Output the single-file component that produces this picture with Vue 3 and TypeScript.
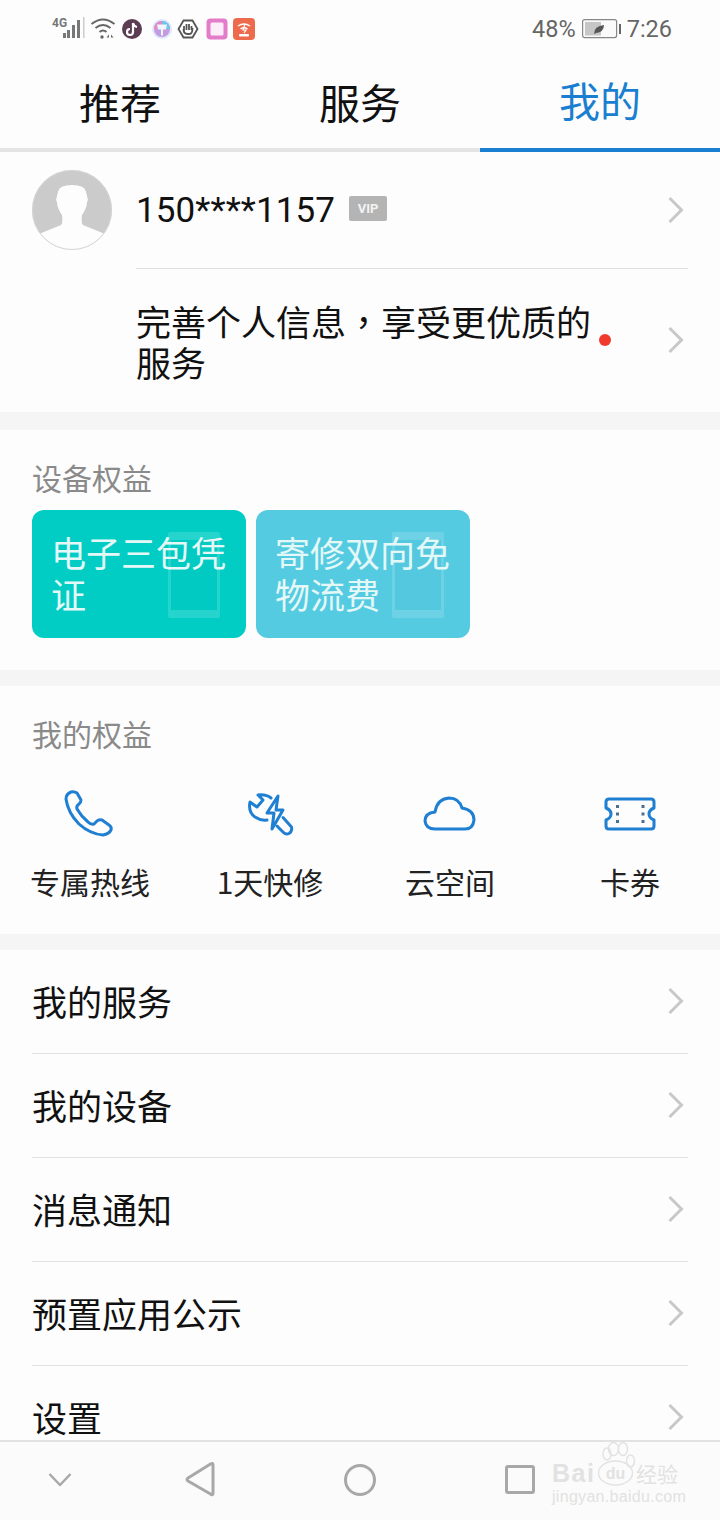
<script setup lang="ts">
const tabs = [
  { label: '推荐', active: false },
  { label: '服务', active: false },
  { label: '我的', active: true },
]
const cards = [
  { text: '电子三包凭证', tone: 'teal' },
  { text: '寄修双向免物流费', tone: 'sky' },
]
const perks = ['专属热线', '1天快修', '云空间', '卡券']
const rows = ['我的服务', '我的设备', '消息通知', '预置应用公示', '设置']
</script>

<template>
  <div class="page">
    <div class="status">
      <div class="status-left">
        <svg class="signal" width="33" height="26" viewBox="0 0 33 26">
          <text x="0" y="11" class="s4g">4G</text>
          <rect x="11" y="17" width="3" height="5" fill="#777" />
          <rect x="15" y="14" width="3" height="8" fill="#777" />
          <rect x="20" y="9" width="3" height="13" fill="#777" />
          <rect x="25" y="4" width="3" height="18" fill="#777" />
          <rect x="31" y="1" width="1.500" height="21" fill="#ccc" />
        </svg>
        <svg class="wifi" width="28" height="24" viewBox="0 0 28 24" fill="none" stroke="#666" stroke-width="2">
          <path d="M1.500 7 Q13 -2 24.500 7" />
          <path d="M5.500 11 Q13 5 20.500 11" />
          <path d="M9.500 15 Q13 12 16.500 15" />
          <circle cx="12" cy="20" r="1.700" fill="#666" stroke="none" />
          <path d="M19 17.500 l-2.500 3 h2.500 z M21 17.500 l2.500 3 h-2.500 z" fill="#666" stroke="none" />
        </svg>
        <svg class="app a1" width="22" height="22" viewBox="0 0 22 22">
          <circle cx="11" cy="11" r="10" fill="#5b3c52" />
          <path d="M12 5 v9 a3 3 0 1 1 -3 -3 M12 5 q1 3.500 4 4" fill="none" stroke="#fff" stroke-width="2.200" />
        </svg>
        <svg class="app a2" width="22" height="22" viewBox="0 0 22 22">
          <circle cx="11" cy="11" r="10" fill="#dfe8fb" />
          <circle cx="11" cy="11" r="8" fill="#c39be0" />
          <path d="M3 11 a8 8 0 0 1 8 -8 v8 z" fill="#e08ac8" />
          <path d="M11 3 a8 8 0 0 1 8 8 h-8 z" fill="#6cc6e8" />
          <path d="M6 6.500 h10 l-1 5 h-3 v6 h-2 v-6 h-3 z" fill="#eef6fb" />
        </svg>
        <svg class="app a3" width="22" height="22" viewBox="0 0 22 22">
          <path d="M6.500 2.500 h9 l5 8.500 -5 8.500 h-9 l-5 -8.500 z" fill="#fff" stroke="#555" stroke-width="1.800" />
          <path d="M7 13 v-5 M9.500 12 v-6 M12 12 v-6 M14.500 12 v-4 M6.500 11 q0 5 4 5 h2 q3 0 3 -6" fill="none" stroke="#555" stroke-width="1.800" />
        </svg>
        <svg class="app a4" width="22" height="22" viewBox="0 0 22 22">
          <rect x="0.500" y="0.500" width="21" height="21" rx="4" fill="#e37cc9" />
          <rect x="4.500" y="4.500" width="13" height="13" rx="1.500" fill="#fbeef8" />
        </svg>
        <svg class="app a5" width="22" height="22" viewBox="0 0 22 22">
          <rect x="0" y="0" width="22" height="22" rx="4" fill="#ee6a4d" />
          <path d="M5 8 q6 -4 12 0 M7.500 11 q3.500 -2.500 7 0" fill="none" stroke="#fff" stroke-width="1.500" />
          <path d="M12 6 l-2 6 h3 l-2 3" fill="none" stroke="#fff" stroke-width="1.200" />
          <rect x="6" y="16" width="10" height="2.500" rx="1" fill="#fff" />
        </svg>
      </div>
      <div class="status-right">
        <span class="pct">48%</span>
        <svg class="battery" width="39" height="20" viewBox="0 0 39 20">
          <rect x="0.600" y="0.600" width="34" height="18" rx="2" fill="#fafafa" stroke="#888" stroke-width="1.200" />
          <rect x="3" y="3" width="16" height="13.500" fill="#c6c6c6" />
          <path d="M12 15 Q12 7 22 6 Q22 13 14 14 z" fill="#555" />
          <rect x="37" y="5" width="2" height="10" fill="#666" />
        </svg>
        <span class="time">7:26</span>
      </div>
    </div>

    <nav class="tabs">
      <div v-for="t in tabs" :key="t.label" class="tab" :class="{ active: t.active }">{{ t.label }}</div>
    </nav>

    <main class="scroll">
      <section class="profile">
        <div class="profile-top">
          <svg class="avatar" width="80" height="80" viewBox="0 0 80 80">
            <defs>
              <clipPath id="avatar-clip"><circle cx="40" cy="40" r="40" /></clipPath>
            </defs>
            <g clip-path="url(#avatar-clip)">
              <rect width="80" height="80" fill="#cbcbcb" />
              <path d="M7 80 V64 L29 55 Q31 53 30 45 Q25 38 25 32 L24 30 L26 22 Q27 15 40 15 Q53 15 54 22 L56 30 L55 32 Q55 38 50 45 Q49 53 51 55 L73 64 V80 Z" fill="#fdfdfd" />
            </g>
            <circle cx="40" cy="40" r="39.500" fill="none" stroke="#d6d6d6" />
          </svg>
          <div class="name-row">
            <span class="phone">150****1157</span>
            <span class="vip">VIP</span>
            <svg class="chev" width="18" height="28" viewBox="0 0 18 28"><path d="M2.500 2 L14.500 14 L2.500 26" /></svg>
          </div>
        </div>
        <div class="profile-info">
          <p class="info-text">完善个人信息<span class="tc">，</span>享受更优质的服务</p>
          <span class="dot"></span>
          <svg class="chev" width="18" height="28" viewBox="0 0 18 28"><path d="M2.500 2 L14.500 14 L2.500 26" /></svg>
        </div>
      </section>

      <section class="block devices">
        <h2 class="block-title">设备权益</h2>
        <div class="cards">
          <div v-for="c in cards" :key="c.text" class="card" :class="c.tone">
            <svg class="ghost" width="52" height="86" viewBox="0 0 52 86">
              <path fill-rule="evenodd" d="M2 0 H50 Q52 0 52 2 V84 Q52 86 50 86 H2 Q0 86 0 84 V2 Q0 0 2 0 Z M3 8 V78 H49 V8 Z" fill="#fff" fill-opacity="0.14" />
              <rect x="3" y="8" width="46" height="70" fill="#000" fill-opacity="0.012" />
            </svg>
            <span class="card-text">{{ c.text }}</span>
          </div>
        </div>
      </section>

      <section class="block perks">
        <h2 class="block-title">我的权益</h2>
        <div class="perk-grid">
          <div v-for="(p, i) in perks" :key="p" class="perk">
            <svg width="56" height="52" viewBox="0 0 56 52" fill="none" stroke="#1f7fd2" stroke-width="3" stroke-linecap="round" stroke-linejoin="round">
              <template v-if="i === 0">
                <path transform="translate(-3 -1)" d="M12 5 Q7 7 7 12 Q9 26 20 37 Q31 47 44 48 Q50 47 52 43 Q53 40 50 38 L43 33 Q40 32 38 34 L35 37 Q32 38 29 35 Q22 29 18 22 Q17 19 20 17 Q22 15 22 13 L18 6 Q15 4 12 5 Z" />
              </template>
              <template v-else-if="i === 1">
                <path d="M29 10 Q24 6 16 7 L21 12 L15 19 L8 14 Q6 24 13 29 Q19 33 25 32" />
                <path d="M36 8 L25 25 L32 25 L30 41 L41 22 L34 22 Z" />
                <path d="M41 29.500 L49.500 39 Q50.500 43 47 45.500 Q44 47 41.500 44.500 L35 38" />
              </template>
              <template v-else-if="i === 2">
                <path d="M13 41 Q4 41 3 33 Q3 25 13 24 Q15 11 27 10 Q37 10 40 20 Q52 22 52 32 Q51 41 43 41 Z" />
              </template>
              <template v-else>
                <path d="M7 11 H49 Q52 11 52 14 V20 Q47 22 47 26 Q47 30 52 32 V38 Q52 41 49 41 H7 Q4 41 4 38 V32 Q9 30 9 26 Q9 22 4 20 V14 Q4 11 7 11 Z" />
                <g fill="#4a6f8f" stroke="none">
                  <rect x="14" y="17" width="3" height="3" />
                  <rect x="14" y="24.500" width="3" height="3" />
                  <rect x="14" y="32" width="3" height="3" />
                  <rect x="39.500" y="17" width="3" height="3" />
                  <rect x="39.500" y="24.500" width="3" height="3" />
                  <rect x="39.500" y="32" width="3" height="3" />
                </g>
              </template>
            </svg>
            <span class="perk-label">{{ p }}</span>
          </div>
        </div>
      </section>

      <section class="list">
        <div v-for="r in rows" :key="r" class="row">
          <span class="row-text">{{ r }}</span>
          <svg class="chev" width="18" height="28" viewBox="0 0 18 28"><path d="M2.500 2 L14.500 14 L2.500 26" /></svg>
        </div>
      </section>
    </main>

    <footer class="navbar">
      <svg class="nav-icon first" width="60" height="40" viewBox="0 0 60 40"><path d="M19.500 14 L30 25 L40.500 14" stroke-width="2.500" /></svg>
      <svg class="nav-icon" width="60" height="40" viewBox="0 0 60 40"><path d="M43 5 V33 Q43 36 40.500 34 L18 21 Q16 19.500 18 18 L40.500 4 Q43 2.500 43 5 Z" /></svg>
      <svg class="nav-icon" width="60" height="40" viewBox="0 0 60 40"><circle cx="30" cy="20" r="14.500" /></svg>
      <svg class="nav-icon" width="60" height="40" viewBox="0 0 60 40"><rect x="16.500" y="6.500" width="27" height="26" rx="1.500" /></svg>
      <div class="watermark">
        <svg class="paw" width="38" height="46" viewBox="0 0 38 46" fill="none" stroke="#e2e2e2" stroke-width="1.400">
          <ellipse cx="9" cy="12" rx="4" ry="6" />
          <ellipse cx="15.500" cy="7" rx="5" ry="6.500" />
          <ellipse cx="25" cy="7" rx="4.500" ry="6.500" />
          <ellipse cx="32.500" cy="19" rx="4" ry="6" />
          <ellipse cx="17.500" cy="31" rx="17" ry="12" />
          <text x="17.500" y="37" class="wm-du" stroke="none" text-anchor="middle">du</text>
        </svg>
        <div class="wm-main">
          <span class="wm-bai">Bai</span>
          <span class="wm-cn">经验</span>
        </div>
        <div class="wm-sub">jingyan.baidu.com</div>
      </div>
    </footer>
  </div>
</template>

<style scoped>
.page {
  position: relative;
  width: 720px;
  height: 1520px;
  display: flex;
  flex-direction: column;
  overflow: hidden;
  background: #fdfdfd;
  font-family: "Noto Sans CJK SC", "Noto Sans", sans-serif;
  color: #111;
}
.status {
  height: 60px;
  flex: none;
  display: flex;
  justify-content: space-between;
  align-items: center;
  padding: 0 48px 2px 52px;
  box-sizing: border-box;
}
.status-left {
  display: flex;
  align-items: center;
}
.wifi { margin-left: 5px; }
.a1 { margin-left: 3px; }
.a2 { margin-left: 8px; }
.a3 { margin-left: 4px; }
.a4 { margin-left: 6.500px; }
.a5 { margin-left: 5.500px; }
.s4g {
  font: 700 12px "Roboto", sans-serif;
  fill: #777;
}
.status-right {
  display: flex;
  align-items: center;
  gap: 6px;
  font: 23.500px "Roboto", sans-serif;
  color: #666;
}
.tabs {
  height: 92px;
  flex: none;
  display: flex;
  box-sizing: border-box;
  border-bottom: 4px solid #e4e4e4;
}
.tab {
  flex: 1;
  height: 92px;
  box-sizing: border-box;
  display: flex;
  align-items: center;
  justify-content: center;
  padding-bottom: 10px;
  font-size: 41px;
  line-height: 1;
  color: #111;
}
.tab.active {
  color: #1a7fd0;
  border-bottom: 4px solid #1a7fd0;
}
.scroll {
  flex: 1;
  min-height: 0;
  overflow: hidden;
}
.profile {
  box-sizing: border-box;
  padding: 18px 32px 0;
  border-bottom: 18px solid #f5f5f5;
  height: 278px;
}
.profile-top {
  display: flex;
  gap: 24px;
  height: 99px;
}
.avatar { flex: none; }
.name-row {
  flex: 1;
  height: 99px;
  display: flex;
  align-items: flex-start;
  padding-top: 19px;
  box-sizing: border-box;
  border-bottom: 1px solid #dedede;
}
.phone {
  font: 35px/44px "Roboto", sans-serif;
  letter-spacing: 0.1px;
  color: #111;
}
.vip {
  margin: 7px 0 0 14px;
  width: 38px;
  height: 25px;
  border-radius: 2px;
  background: #b4b4b4;
  color: #f2f2f2;
  font: 700 13px/25px "Roboto", sans-serif;
  text-align: center;
}
.name-row .chev { margin: 7px 3px 0 auto; }
.chev {
  flex: none;
  fill: none;
  stroke: #c8c8c8;
  stroke-width: 3;
}
.profile-info {
  display: flex;
  align-items: center;
  margin-left: 104px;
  padding-top: 31px;
}
.info-text {
  margin: 0;
  width: 460px;
  font-size: 35px;
  line-height: 41px;
  color: #111;
}
.tc { font-family: "Noto Sans CJK TC", sans-serif; }
.dot {
  width: 12px;
  height: 12px;
  margin: 0 0 2px 3px;
  border-radius: 50%;
  background: #f03a2e;
  flex: none;
}
.profile-info .chev { margin: 0 3px 2px auto; }
.block {
  box-sizing: border-box;
  border-bottom: 16px solid #f5f5f5;
  padding: 26px 32px 0;
}
.block-title {
  margin: 0;
  font-size: 30px;
  font-weight: 400;
  line-height: 42px;
  color: #8a8a8a;
}
.devices { height: 256px; }
.cards {
  display: flex;
  gap: 10px;
  margin-top: 12px;
}
.card {
  position: relative;
  width: 214px;
  height: 128px;
  box-sizing: border-box;
  border-radius: 12px;
  padding: 21px 18px 0 19px;
  overflow: hidden;
  color: #e4f8f7;
  font-size: 35px;
  line-height: 42px;
}
.card.teal { background: #02cdc5; }
.card.sky { background: #55cbe2; }
.ghost {
  position: absolute;
  left: 136px;
  top: 22px;
}
.card-text { position: relative; }
.perks { height: 264px; padding-top: 26px; }
.perk-grid {
  display: grid;
  grid-template-columns: repeat(4, 180px);
  margin: 34px -32px 0 -32px;
}
.perk {
  display: flex;
  flex-direction: column;
  align-items: center;
  gap: 20px;
}
.perk-label {
  font-size: 30px;
  line-height: 42px;
  color: #222;
}
.list { padding: 0 32px; }
.row {
  height: 104px;
  box-sizing: border-box;
  display: flex;
  align-items: center;
  justify-content: space-between;
  padding: 0 3px 2px 0;
  border-bottom: 1px solid #e2e2e2;
}
.row:last-child { border-bottom: none; }
.row-text {
  font-size: 35px;
  line-height: 44px;
  color: #111;
}
.navbar {
  position: relative;
  height: 80px;
  flex: none;
  box-sizing: border-box;
  border-top: 2px solid #e2e2e2;
  background: #fbfbfb;
  display: flex;
  gap: 100px;
  padding: 18px 0 0 30px;
}
.nav-icon {
  flex: none;
  fill: none;
  stroke: #a8a8a8;
  stroke-width: 3;
  stroke-linejoin: round;
}
.nav-icon.first { margin-right: -20px; }
.watermark {
  position: absolute;
  left: 552px;
  top: 0;
  width: 130px;
  height: 62px;
  color: #e2e2e2;
}
.paw {
  position: absolute;
  left: 46px;
  top: 0;
}
.wm-du {
  font: 700 16px "Liberation Sans", sans-serif;
  fill: #e2e2e2;
}
.wm-main {
  display: flex;
  justify-content: space-between;
  padding-top: 17px;
  height: 29px;
}
.wm-bai {
  font: 700 25px/29px "Liberation Sans", sans-serif;
  letter-spacing: 1.500px;
}
.wm-cn {
  font: 400 21px/29px "Noto Sans CJK SC", sans-serif;
  margin-right: 4px;
}
.wm-sub {
  margin-top: 0;
  font: 16px/18px "Liberation Sans", sans-serif;
  letter-spacing: 0.300px;
  white-space: nowrap;
}
</style>
